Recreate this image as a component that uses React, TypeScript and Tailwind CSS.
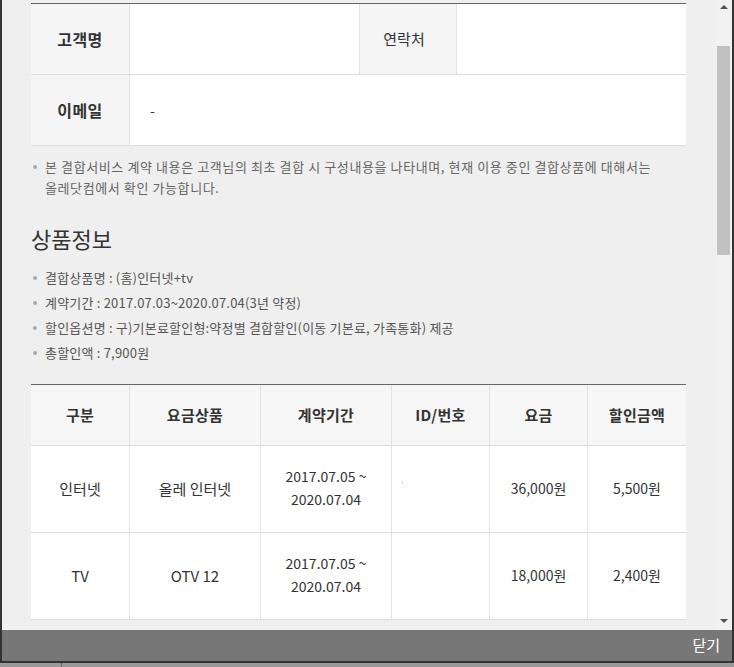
import React from "react";

const font = { fontFamily: '"Noto Sans CJK KR", "Noto Sans", sans-serif' };

const notes = [
  "결합상품명 : (홈)인터넷+tv",
  "계약기간 : 2017.07.03~2020.07.04(3년 약정)",
  "할인옵션명 : 구)기본료할인형:약정별 결합할인(이동 기본료, 가족통화) 제공",
  "총할인액 : 7,900원",
];

const headers = ["구분", "요금상품", "계약기간", "ID/번호", "요금", "할인금액"];

const rows = [
  ["인터넷", "올레 인터넷", "2017.07.05 ~\n2020.07.04", "", "36,000원", "5,500원"],
  ["TV", "OTV 12", "2017.07.05 ~\n2020.07.04", "", "18,000원", "2,400원"],
];

function Bullet({ children }: { children: React.ReactNode }) {
  return (
    <li className="flex items-start">
      <span className="mt-[9px] mr-[8px] ml-[2px] h-[4px] w-[4px] shrink-0 rounded-full bg-[#aaa]" />
      <span>{children}</span>
    </li>
  );
}

export default function App() {
  return (
    <div className="relative h-[667px] w-[734px] overflow-hidden bg-[#999]" style={font}>
      <div className="flex h-[663px] w-[734px] flex-col border-x-2 border-b-2 border-[#333]">
        <div className="flex min-h-0 flex-1">
          <div className="min-w-0 flex-1 overflow-hidden bg-[#efefef] pl-[29px] pt-[3px]">
            <div className="w-[655px] border-t border-[#666]">
              <div className="grid grid-cols-[99px_230px_97px_229px] border-b border-[#ddd]">
                <div className="flex h-[70px] items-center justify-center border-r border-[#e3e3e3] bg-[#f5f5f5] text-[16px] font-bold tracking-[0.5px] text-[#333]">고객명</div>
                <div className="border-r border-[#e3e3e3] bg-white" />
                <div className="flex h-[70px] items-center justify-center border-r border-[#e3e3e3] bg-[#f5f5f5] pr-[8px] text-[15px] text-[#333]">연락처</div>
                <div className="bg-white" />
              </div>
              <div className="grid grid-cols-[99px_1fr] border-b border-[#ddd]">
                <div className="flex h-[70px] items-center justify-center border-r border-[#e3e3e3] bg-[#f5f5f5] text-[16px] font-bold tracking-[0.5px] text-[#333]">이메일</div>
                <div className="flex items-center bg-white pl-[20px] text-[14px] text-[#333]">-</div>
              </div>
            </div>

            <ul className="mt-[10px] w-[670px] text-[13px] leading-[21px] tracking-[0.6px] text-[#666]">
              <Bullet>
                본 결합서비스 계약 내용은 고객님의 최초 결합 시 구성내용을 나타내며, 현재 이용 중인 결합상품에 대해서는
                <br />
                올레닷컴에서 확인 가능합니다.
              </Bullet>
            </ul>

            <h2 className="mt-[25px] text-[22px] font-normal leading-[30px] text-[#333]">상품정보</h2>

            <ul className="mt-[14px] flex flex-col gap-[4px] text-[13px] leading-[21px] tracking-[0.2px] text-[#555]">
              {notes.map((n) => (
                <Bullet key={n}>{n}</Bullet>
              ))}
            </ul>

            <div className="mt-[21px] w-[655px] border-t border-[#666]">
              <div className="grid h-[61px] grid-cols-[99px_131px_131px_98px_98px_98px] border-b border-[#ddd] bg-[#f6f6f6]">
                {headers.map((h, i) => (
                  <div
                    key={h}
                    className={`flex items-center justify-center text-[15px] font-bold tracking-[0.3px] text-[#333] ${i < 5 ? "border-r border-[#e3e3e3]" : ""}`}
                  >
                    {h}
                  </div>
                ))}
              </div>
              {rows.map((r, ri) => (
                <div key={ri} className="grid h-[87px] grid-cols-[99px_131px_131px_98px_98px_98px] border-b border-[#ddd] bg-white">
                  {r.map((c, i) => (
                    <div
                      key={i}
                      className={`relative flex items-center justify-center whitespace-pre-line pb-[2px] text-center leading-[23px] text-[#333] ${i < 2 ? "text-[15px]" : "text-[14px]"} ${i < 5 ? "border-r border-[#e3e3e3]" : ""}`}
                    >
                      {c}
                      {ri === 0 && i === 3 && (
                        <span className="absolute left-[10px] top-[36px] h-[1px] w-[1px] bg-[#d9a040]" />
                      )}
                    </div>
                  ))}
                </div>
              ))}
            </div>
          </div>

          <div className="relative w-[16px] shrink-0 bg-[#f1f1f1]">
            <svg className="absolute left-[3px] top-[4px]" width="10" height="6" viewBox="0 0 10 6">
              <path d="M1 5 L5 1 L9 5 Z" fill="#505050" />
            </svg>
            <div className="absolute left-[1px] top-[46px] h-[209px] w-[13px] bg-[#c1c1c1]" />
            <svg className="absolute bottom-[6px] left-[3px]" width="10" height="6" viewBox="0 0 10 6">
              <path d="M1 1 L9 1 L5 5 Z" fill="#505050" />
            </svg>
          </div>
        </div>

        <div className="flex h-[31px] shrink-0 items-center justify-end bg-[#777] pr-[12px] text-[15px] text-white">
          닫기
        </div>
      </div>
      <div className="absolute bottom-0 left-[61px] h-[4px] w-[1px] bg-[#666]" />
    </div>
  );
}
